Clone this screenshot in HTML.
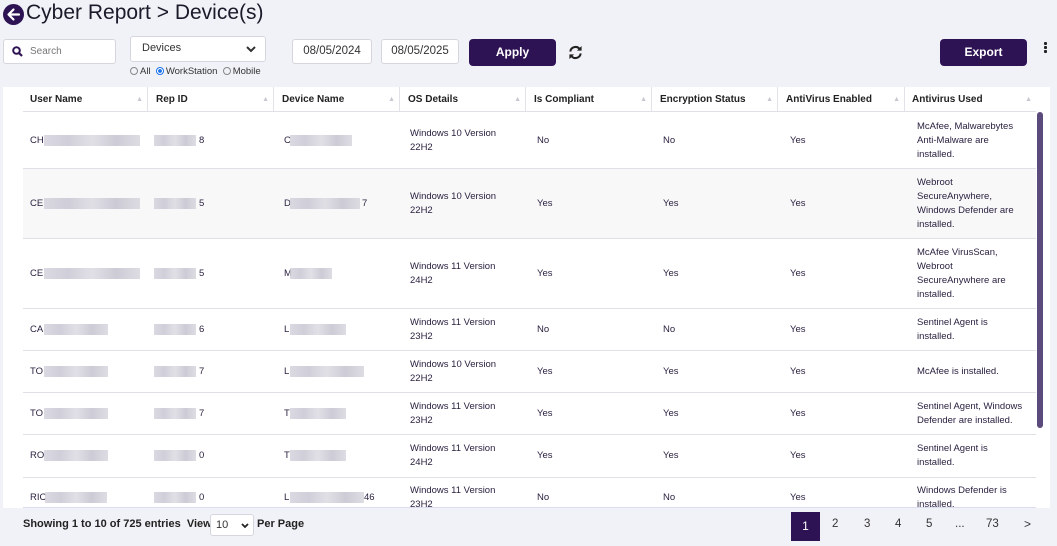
<!DOCTYPE html>
<html><head><style>
*{box-sizing:border-box;margin:0;padding:0}
body{width:1057px;height:546px;background:#f1f2f7;font-family:"Liberation Sans",sans-serif;position:relative;overflow:hidden;color:#2b2140}
.a{position:absolute}
.inp{position:absolute;background:#fff;border:1px solid #d6d6de;border-radius:3px;font-size:12px;color:#333}
.btn{position:absolute;background:#2e1354;color:#fff;font-weight:bold;font-size:12px;border-radius:4px;text-align:center;line-height:27px}
.hd{position:absolute;top:87px;height:25px;font-size:10px;font-weight:bold;line-height:25px;color:#222;border-right:1px solid #e2e2e8}
.hd span{position:absolute;right:4px;top:0;color:#c8c8d0;font-size:7px;font-weight:normal}
.row{position:absolute;left:23px;width:1013px;border-top:1px solid #e0e0e6}
.c{position:absolute;font-size:9.5px;line-height:14px;color:#2b2140}
.bl{position:absolute;height:11px;background:linear-gradient(90deg,#d4d2dc,#c8c6d2,#dcdae2,#c4c2ce,#d8d6de);opacity:.85}
.rd{display:inline-block;width:8px;height:8px;border:1px solid #888;border-radius:50%;vertical-align:-1px;margin-right:2px}
</style></head><body>
<svg class="a" style="left:3px;top:4px" width="21" height="21" viewBox="0 0 21 21"><circle cx="10.5" cy="10.5" r="10.5" fill="#2e1354"/><path d="M16 10.5H6M10.5 5.5L5.5 10.5L10.5 15.5" stroke="#fff" stroke-width="2.2" fill="none" stroke-linecap="round" stroke-linejoin="round"/></svg>
<div class="a" style="left:26px;top:1px;font-size:21px;color:#1a1a2a">Cyber Report &gt; Device(s)</div>
<div class="inp" style="left:3px;top:39px;width:113px;height:25px"><svg class="a" style="left:8px;top:6px" width="11" height="11" viewBox="0 0 11 11"><circle cx="4.5" cy="4.5" r="3.3" stroke="#2e1354" stroke-width="2" fill="none"/><path d="M7 7L10 10" stroke="#2e1354" stroke-width="2.2"/></svg><span class="a" style="left:26px;top:6px;font-size:10px;color:#777">Search</span></div>
<div class="inp" style="left:130px;top:36px;width:136px;height:26px"><span class="a" style="left:11px;top:5px;font-size:11px">Devices</span><svg class="a" style="right:9px;top:9px" width="10" height="7" viewBox="0 0 10 7"><path d="M1 1L5 5L9 1" stroke="#333" stroke-width="2" fill="none"/></svg></div>
<div class="a" style="left:130px;top:66px;font-size:9.5px;color:#333"><span class="rd"></span>All &nbsp;<span class="rd" style="border-color:#1a73e8;background:radial-gradient(#1a73e8 40%,#fff 50%)"></span>WorkStation &nbsp;<span class="rd"></span>Mobile</div>
<div class="inp" style="left:292px;top:39px;width:80px;height:25px;text-align:center;line-height:23px;font-size:11.5px">08/05/2024</div>
<div class="inp" style="left:381px;top:39px;width:78px;height:25px;text-align:center;line-height:23px;font-size:11.5px">08/05/2025</div>
<div class="btn" style="left:469px;top:39px;width:87px;height:27px">Apply</div>
<svg class="a" style="left:568px;top:45px" width="15" height="15" viewBox="0 0 16 16"><path d="M2.5 7A5.5 5.5 0 0 1 12.5 4.5M13.5 9A5.5 5.5 0 0 1 3.5 11.5" stroke="#222" stroke-width="2.2" fill="none"/><path d="M14.5 1V6H9.5ZM1.5 15V10H6.5Z" fill="#222"/></svg>
<div class="btn" style="left:940px;top:39px;width:87px;height:27px">Export</div>
<div class="a" style="left:1044px;top:42px;width:3px;height:3px;background:#222;border-radius:1px;box-shadow:0 4px 0 #222,0 8px 0 #222"></div>
<div class="a" style="left:3px;top:87px;width:1047px;height:421px;background:#fff"></div>
<div class="hd" style="left:23px;width:125px;padding-left:7px">User Name<span>▲</span></div>
<div class="hd" style="left:148px;width:126px;padding-left:8px">Rep ID<span>▲</span></div>
<div class="hd" style="left:274px;width:126px;padding-left:8px">Device Name<span>▲</span></div>
<div class="hd" style="left:400px;width:126px;padding-left:8px">OS Details<span>▲</span></div>
<div class="hd" style="left:526px;width:126px;padding-left:8px">Is Compliant<span>▲</span></div>
<div class="hd" style="left:652px;width:126px;padding-left:8px">Encryption Status<span>▲</span></div>
<div class="hd" style="left:778px;width:127px;padding-left:8px">AntiVirus Enabled<span>▲</span></div>
<div class="hd" style="left:905px;width:131px;padding-left:7px;border-right:none">Antivirus Used<span>▲</span></div>

<div class="row" style="top:111px;height:57px"></div>
<div class="row" style="top:168px;height:70px;background:#f8f8f8"></div>
<div class="row" style="top:238px;height:70px"></div>
<div class="row" style="top:308px;height:42px"></div>
<div class="row" style="top:350px;height:42px"></div>
<div class="row" style="top:392px;height:42px"></div>
<div class="row" style="top:434px;height:43px"></div>
<div class="row" style="top:477px;height:31px"></div>
<div class="a" style="left:23px;top:507px;width:1013px;border-top:1px solid #dcdcf0"></div>

<div class="c" style="left:30px;top:134px">CH</div><div class="bl" style="left:44px;top:135px;width:96px"></div><div class="bl" style="left:154px;top:135px;width:42px"></div><div class="c" style="left:199px;top:134px">8</div><div class="c" style="left:284px;top:134px">C</div><div class="bl" style="left:290px;top:135px;width:62px"></div>
<div class="c" style="left:410px;top:127px">Windows 10 Version<br>22H2</div><div class="c" style="left:537px;top:134px">No</div><div class="c" style="left:663px;top:134px">No</div><div class="c" style="left:790px;top:134px">Yes</div><div class="c" style="left:917px;top:120px">McAfee, Malwarebytes<br>Anti-Malware are<br>installed.</div>

<div class="c" style="left:30px;top:197px">CE</div><div class="bl" style="left:44px;top:198px;width:96px"></div><div class="bl" style="left:154px;top:198px;width:42px"></div><div class="c" style="left:199px;top:197px">5</div><div class="c" style="left:284px;top:197px">D</div><div class="bl" style="left:290px;top:198px;width:70px"></div><div class="c" style="left:362px;top:197px">7</div>
<div class="c" style="left:410px;top:190px">Windows 10 Version<br>22H2</div><div class="c" style="left:537px;top:197px">Yes</div><div class="c" style="left:663px;top:197px">Yes</div><div class="c" style="left:790px;top:197px">Yes</div><div class="c" style="left:917px;top:176px">Webroot<br>SecureAnywhere,<br>Windows Defender are<br>installed.</div>

<div class="c" style="left:30px;top:267px">CE</div><div class="bl" style="left:44px;top:268px;width:96px"></div><div class="bl" style="left:154px;top:268px;width:42px"></div><div class="c" style="left:199px;top:267px">5</div><div class="c" style="left:284px;top:267px">M</div><div class="bl" style="left:290px;top:268px;width:42px"></div>
<div class="c" style="left:410px;top:260px">Windows 11 Version<br>24H2</div><div class="c" style="left:537px;top:267px">Yes</div><div class="c" style="left:663px;top:267px">Yes</div><div class="c" style="left:790px;top:267px">Yes</div><div class="c" style="left:917px;top:246px">McAfee VirusScan,<br>Webroot<br>SecureAnywhere are<br>installed.</div>

<div class="c" style="left:30px;top:323px">CA</div><div class="bl" style="left:44px;top:324px;width:64px"></div><div class="bl" style="left:154px;top:324px;width:42px"></div><div class="c" style="left:199px;top:323px">6</div><div class="c" style="left:284px;top:323px">L</div><div class="bl" style="left:290px;top:324px;width:56px"></div>
<div class="c" style="left:410px;top:316px">Windows 11 Version<br>23H2</div><div class="c" style="left:537px;top:323px">No</div><div class="c" style="left:663px;top:323px">No</div><div class="c" style="left:790px;top:323px">Yes</div><div class="c" style="left:917px;top:316px">Sentinel Agent is<br>installed.</div>

<div class="c" style="left:30px;top:365px">TO</div><div class="bl" style="left:44px;top:366px;width:64px"></div><div class="bl" style="left:154px;top:366px;width:42px"></div><div class="c" style="left:199px;top:365px">7</div><div class="c" style="left:284px;top:365px">L</div><div class="bl" style="left:290px;top:366px;width:74px"></div>
<div class="c" style="left:410px;top:358px">Windows 10 Version<br>22H2</div><div class="c" style="left:537px;top:365px">Yes</div><div class="c" style="left:663px;top:365px">Yes</div><div class="c" style="left:790px;top:365px">Yes</div><div class="c" style="left:917px;top:365px">McAfee is installed.</div>

<div class="c" style="left:30px;top:407px">TO</div><div class="bl" style="left:44px;top:408px;width:64px"></div><div class="bl" style="left:154px;top:408px;width:42px"></div><div class="c" style="left:199px;top:407px">7</div><div class="c" style="left:284px;top:407px">T</div><div class="bl" style="left:290px;top:408px;width:56px"></div>
<div class="c" style="left:410px;top:400px">Windows 11 Version<br>23H2</div><div class="c" style="left:537px;top:407px">Yes</div><div class="c" style="left:663px;top:407px">Yes</div><div class="c" style="left:790px;top:407px">Yes</div><div class="c" style="left:917px;top:400px">Sentinel Agent, Windows<br>Defender are installed.</div>

<div class="c" style="left:30px;top:449px">RO</div><div class="bl" style="left:44px;top:450px;width:64px"></div><div class="bl" style="left:154px;top:450px;width:42px"></div><div class="c" style="left:199px;top:449px">0</div><div class="c" style="left:284px;top:449px">T</div><div class="bl" style="left:290px;top:450px;width:56px"></div>
<div class="c" style="left:410px;top:442px">Windows 11 Version<br>24H2</div><div class="c" style="left:537px;top:449px">Yes</div><div class="c" style="left:663px;top:449px">Yes</div><div class="c" style="left:790px;top:449px">Yes</div><div class="c" style="left:917px;top:442px">Sentinel Agent is<br>installed.</div>

<div class="a" style="left:23px;top:478px;width:1013px;height:29px;overflow:hidden">
<div class="c" style="left:7px;top:13px">RIC</div><div class="bl" style="left:22px;top:14px;width:62px"></div><div class="bl" style="left:131px;top:14px;width:42px"></div><div class="c" style="left:176px;top:13px">0</div><div class="c" style="left:261px;top:13px">L</div><div class="bl" style="left:267px;top:14px;width:74px"></div><div class="c" style="left:341px;top:13px">46</div>
<div class="c" style="left:387px;top:6px">Windows 11 Version<br>23H2</div><div class="c" style="left:514px;top:13px">No</div><div class="c" style="left:640px;top:13px">No</div><div class="c" style="left:767px;top:13px">Yes</div><div class="c" style="left:894px;top:6px">Windows Defender is<br>installed.</div>
</div>

<div class="a" style="left:1037px;top:112px;width:6px;height:316px;background:#5b4a7c;border-radius:3px"></div>

<div class="a" style="left:23px;top:518px;font-size:11px;font-weight:bold;color:#222">Showing 1 to 10 of 725 entries &nbsp;View</div>
<div class="inp" style="left:210px;top:514px;width:44px;height:22px;font-size:11px"><span class="a" style="left:5px;top:4px">10</span><svg class="a" style="right:4px;top:8px" width="8" height="6" viewBox="0 0 8 6"><path d="M1 1L4 4L7 1" stroke="#222" stroke-width="1.8" fill="none"/></svg></div>
<div class="a" style="left:257px;top:518px;font-size:11px;font-weight:bold;color:#222">Per Page</div>
<div class="a" style="left:791px;top:512px;width:29px;height:29px;background:#2e1354;color:#fff;font-size:12px;text-align:center;line-height:29px">1</div>
<div class="a" style="left:832px;top:518px;font-size:11.5px;color:#333">2</div>
<div class="a" style="left:864px;top:518px;font-size:11.5px;color:#333">3</div>
<div class="a" style="left:895px;top:518px;font-size:11.5px;color:#333">4</div>
<div class="a" style="left:926px;top:518px;font-size:11.5px;color:#333">5</div>
<div class="a" style="left:955px;top:518px;font-size:11.5px;color:#333">...</div>
<div class="a" style="left:986px;top:518px;font-size:11.5px;color:#333">73</div>
<div class="a" style="left:1024px;top:517px;font-size:12px;color:#333">&gt;</div>
</body></html>
